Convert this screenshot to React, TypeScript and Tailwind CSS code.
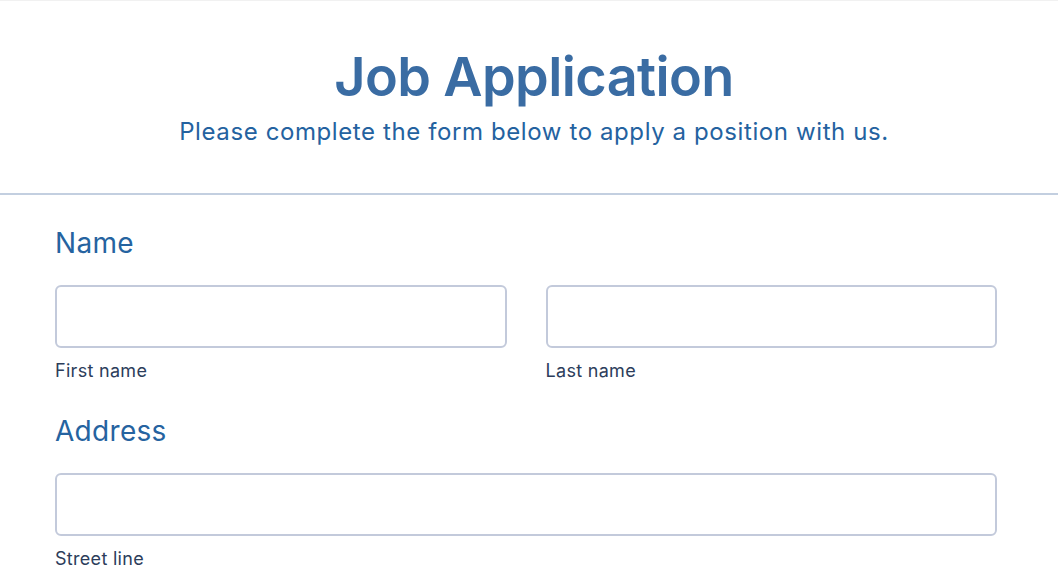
import React from 'react'

function Field({ label }: { label: string }) {
  return (
    <div className="flex flex-col">
      <input
        type="text"
        className="h-[63px] w-full rounded-md border-2 border-[#c3cadb] bg-white px-3 outline-none"
      />
      <span className="mt-[11px] text-[18px] leading-6 tracking-[0.3px] text-[#2c3d5b]">{label}</span>
    </div>
  )
}

export default function App() {
  return (
    <div className="min-h-screen border-t border-[#f1f1f1] bg-white font-['Inter',sans-serif]">
      <header className="border-b-2 border-[#c3cfe0] pb-[47px] pl-[10px] pt-[49px] text-center">
        <h1 className="text-[54px] font-semibold leading-none tracking-[-0.6px] text-[#3a6ca3]">Job Application</h1>
        <p className="mt-[14px] text-[24px] leading-7 tracking-[0.6px] text-[#2462a0]">
          Please complete the form below to apply a position with us.
        </p>
      </header>

      <main className="ml-[55px] mr-[61px] pt-[32px]">
        <section>
          <h2 className="text-[28px] leading-8 tracking-[0.3px] text-[#2563a0]">Name</h2>
          <div className="mt-[26px] grid grid-cols-2 gap-[39px]">
            <Field label="First name" />
            <Field label="Last name" />
          </div>
        </section>

        <section className="mt-[32px]">
          <h2 className="text-[28px] leading-8 tracking-[0.3px] text-[#2563a0]">Address</h2>
          <div className="mt-[26px]">
            <Field label="Street line" />
          </div>
        </section>
      </main>
    </div>
  )
}
